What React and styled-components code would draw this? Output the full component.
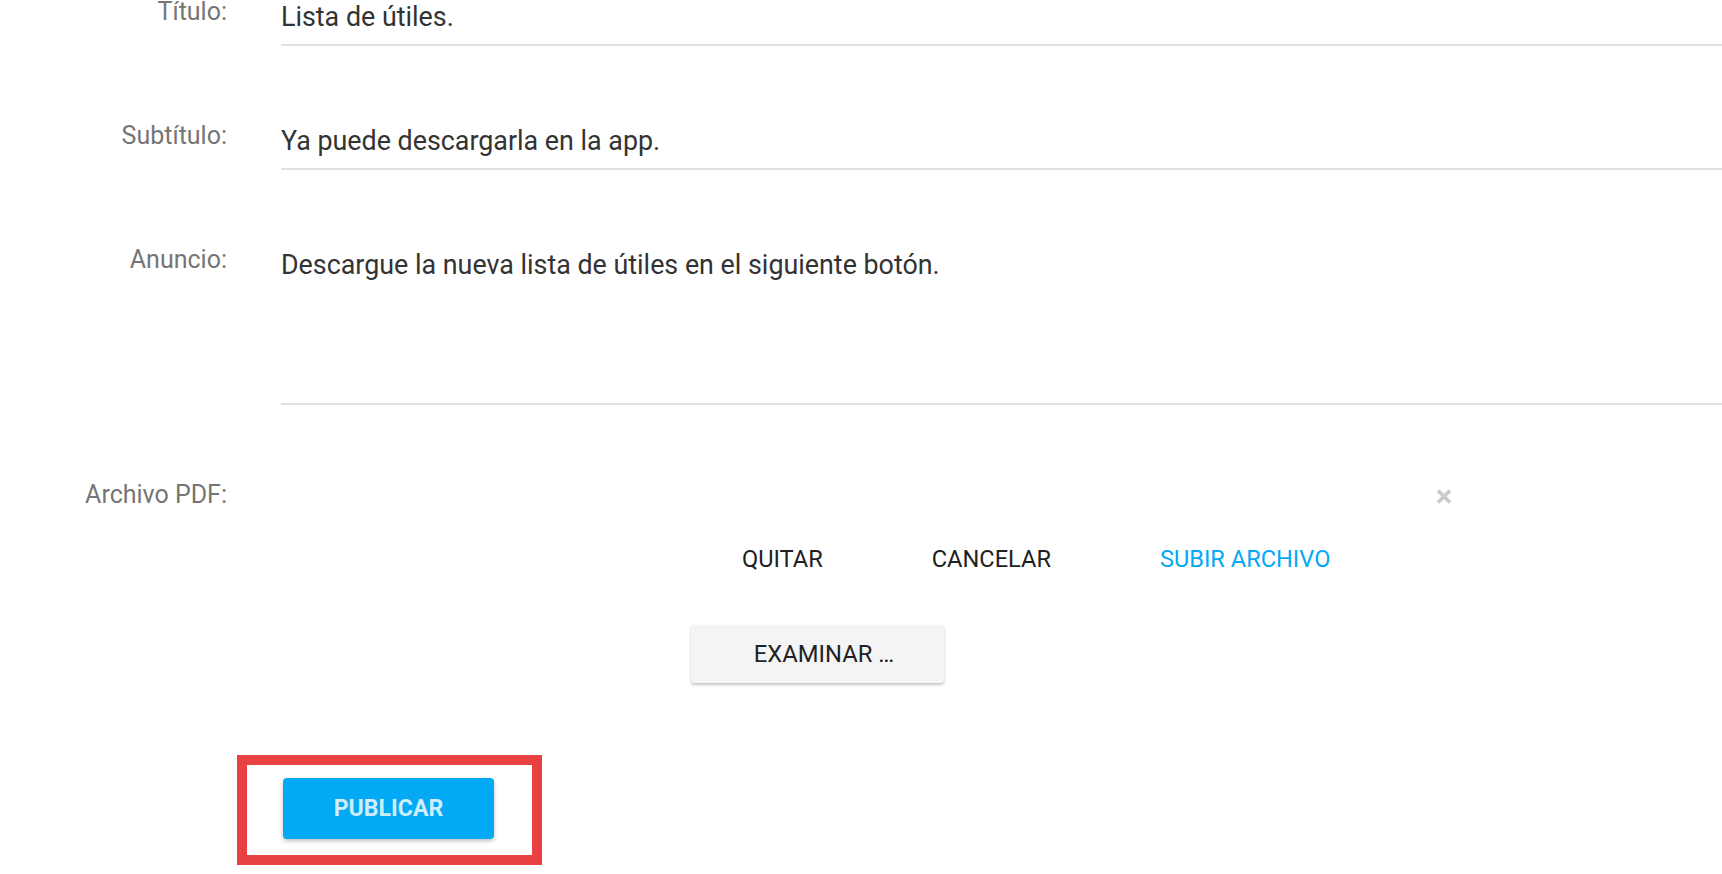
import React from "react";
import styled, { createGlobalStyle } from "styled-components";

const GlobalStyle = createGlobalStyle`
  html, body {
    margin: 0;
    padding: 0;
    background: #ffffff;
    font-family: Roboto, "Liberation Sans", Arial, sans-serif;
    overflow: hidden;
  }
  * { box-sizing: border-box; }
`;

const Page = styled.div`
  width: 1722px;
  min-height: 874px;
  background: #ffffff;
`;

const Form = styled.form`
  display: flex;
  flex-direction: column;
`;

const FieldRow = styled.div`
  display: grid;
  grid-template-columns: 227px 1fr;
  column-gap: 54px;
  align-items: start;
  margin-bottom: ${(p) => (p.$gap ?? 78)}px;
`;

const Label = styled.label`
  padding-top: 2px;
  font-size: 25px;
  line-height: 20px;
  color: #757575;
  text-align: right;
  white-space: nowrap;
`;

const TextInput = styled.input`
  display: block;
  width: 100%;
  height: 46px;
  margin: 0;
  padding: 1.5px 0 11.5px 0;
  border: none;
  border-bottom: 2px solid #e0e0e0;
  outline: none;
  background: transparent;
  font-family: Roboto, "Liberation Sans", Arial, sans-serif;
  font-size: 26.85px;
  line-height: 31px;
  color: #333333;
`;

const TextArea = styled.textarea`
  display: block;
  width: 100%;
  height: 157px;
  margin: 0;
  padding: 1.5px 0 11.5px 0;
  border: none;
  border-bottom: 2px solid #e0e0e0;
  outline: none;
  resize: none;
  background: transparent;
  font-family: Roboto, "Liberation Sans", Arial, sans-serif;
  font-size: 26.85px;
  line-height: 31px;
  color: #333333;
  overflow: hidden;
`;

const FileWidget = styled.div`
  display: flex;
  flex-direction: column;
  align-items: flex-start;
`;

const CloseRow = styled.div`
  width: 1172px;
  height: 26px;
  display: flex;
  justify-content: flex-end;
  align-items: center;
`;

const CloseButton = styled.button`
  display: flex;
  align-items: center;
  justify-content: center;
  padding: 0;
  border: none;
  background: transparent;
  width: 18px;
  height: 18px;
  cursor: pointer;
`;

const ActionRow = styled.div`
  display: flex;
  gap: 57px;
  margin-top: 20px;
  margin-left: 435px;
`;

const FlatButton = styled.button`
  height: 59px;
  padding: 0 26px;
  border: none;
  background: transparent;
  font-family: Roboto, "Liberation Sans", Arial, sans-serif;
  font-size: 23.6px;
  font-weight: 400;
  text-transform: uppercase;
  color: ${(p) => (p.$primary ? "#03a9f4" : "#212121")};
  cursor: pointer;
`;

const BrowseButton = styled.button`
  margin-top: 37px;
  margin-left: 410px;
  width: 253px;
  height: 58px;
  padding: 0 0 0 13px;
  border: none;
  border-radius: 3px;
  background: #f4f4f4;
  box-shadow: 0 2px 3px rgba(0, 0, 0, 0.22), 0 0 1px rgba(0, 0, 0, 0.08);
  font-family: Roboto, "Liberation Sans", Arial, sans-serif;
  font-size: 23.8px;
  font-weight: 400;
  color: #222222;
  cursor: pointer;
`;

const Highlight = styled.div`
  align-self: flex-start;
  margin-top: 72px;
  margin-left: 237px;
  border: 10px solid #e94141;
  padding: 13px 38px 16px 36px;
  display: flex;
`;

const PrimaryButton = styled.button`
  width: 211px;
  height: 61px;
  border: none;
  border-radius: 4px;
  background: #03a9f4;
  box-shadow: 0 2px 4px rgba(0, 0, 0, 0.25);
  font-family: Roboto, "Liberation Sans", Arial, sans-serif;
  font-size: 23.1px;
  font-weight: 700;
  color: rgba(255, 255, 255, 0.82);
  cursor: pointer;
`;

const CloseIcon = () => (
  <svg width="18" height="17" viewBox="0 0 18 17" aria-hidden="true">
    <path d="M3 2.5 L15 14.5 M15 2.5 L3 14.5" stroke="#cacaca" strokeWidth="3.6" strokeLinecap="butt" fill="none" />
  </svg>
);

export default function App() {
  return (
    <Page>
      <GlobalStyle />
      <Form onSubmit={(e) => e.preventDefault()}>
        <FieldRow>
          <Label htmlFor="titulo">Título:</Label>
          <TextInput id="titulo" defaultValue="Lista de útiles." />
        </FieldRow>
        <FieldRow>
          <Label htmlFor="subtitulo">Subtítulo:</Label>
          <TextInput id="subtitulo" defaultValue="Ya puede descargarla en la app." />
        </FieldRow>
        <FieldRow>
          <Label htmlFor="anuncio">Anuncio:</Label>
          <TextArea id="anuncio" defaultValue="Descargue la nueva lista de útiles en el siguiente botón." />
        </FieldRow>
        <FieldRow $gap={0}>
          <Label>Archivo PDF:</Label>
          <FileWidget>
            <CloseRow>
              <CloseButton type="button" aria-label="Cerrar">
                <CloseIcon />
              </CloseButton>
            </CloseRow>
            <ActionRow>
              <FlatButton type="button">Quitar</FlatButton>
              <FlatButton type="button">Cancelar</FlatButton>
              <FlatButton type="button" $primary>Subir archivo</FlatButton>
            </ActionRow>
            <BrowseButton type="button">EXAMINAR …</BrowseButton>
          </FileWidget>
        </FieldRow>
        <Highlight>
          <PrimaryButton type="submit">PUBLICAR</PrimaryButton>
        </Highlight>
      </Form>
    </Page>
  );
}
